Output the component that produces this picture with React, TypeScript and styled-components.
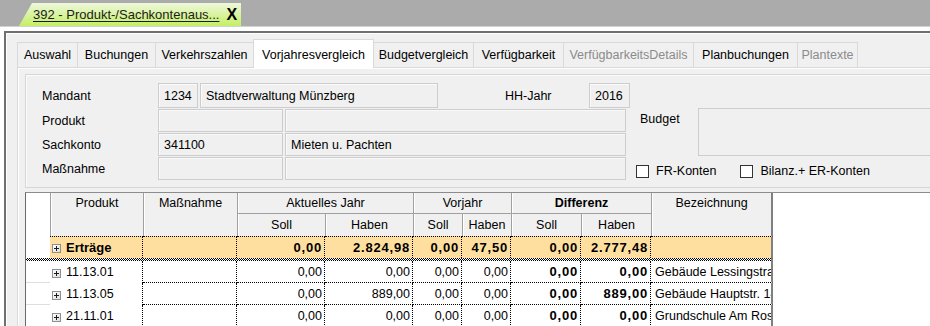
import React from 'react';
import styled, { createGlobalStyle } from 'styled-components';

const GlobalStyle = createGlobalStyle`
  html, body { margin: 0; padding: 0; }
  body {
    font-family: "Liberation Sans", Arial, sans-serif;
    font-size: 12.5px;
    color: #000;
    background: #f0f0f0;
  }
`;

const Screen = styled.div`
  width: 930px;
  height: 326px;
  overflow: hidden;
  display: flex;
  flex-direction: column;
  background: #ababab;
`;

const TopBar = styled.div`
  height: 26px;
  flex: none;
  display: flex;
  align-items: flex-end;
  padding-left: 19px;
  background: #ababab;
`;

const DocTab = styled.div`
  width: 222px;
  height: 23px;
  box-sizing: border-box;
  padding-left: 14px;
  display: flex;
  align-items: center;
  gap: 7px;
  background: linear-gradient(#eef7dc, #c4ef64);
  clip-path: polygon(13px 0, 100% 0, 100% 100%, 0 100%);
`;

const DocTitle = styled.span`
  font-size: 13px;
  color: #1c1c1c;
  text-decoration: underline;
  text-underline-offset: 2px;
  white-space: nowrap;
`;

const CloseX = styled.span`
  font-size: 16px;
  font-weight: bold;
  line-height: 1;
  color: #000;
`;

const Body = styled.div`
  flex: 1;
  min-height: 0;
  display: flex;
  background: #fff;
  border-top: 1px solid #d2d2d2;
  padding: 4px 0 0 4px;
`;

const Window = styled.div`
  flex: 1;
  min-width: 0;
  display: flex;
  flex-direction: column;
  background: #f0f0f0;
  border-top: 2px solid #6f6f6f;
  border-left: 2px solid #6f6f6f;
  box-shadow: inset 1px 1px 0 #fff;
  padding: 6px 0 0 11px;
`;

const TabStrip = styled.div`
  height: 28px;
  flex: none;
  display: flex;
  align-items: flex-end;
`;

const Tab = styled.div<{ $w: number; $active?: boolean; $disabled?: boolean }>`
  width: ${(p) => p.$w}px;
  height: ${(p) => (p.$active ? 29 : 25)}px;
  margin-bottom: ${(p) => (p.$active ? -1 : 0)}px;
  margin-right: -1px;
  box-sizing: border-box;
  padding-top: ${(p) => (p.$active ? 2 : 0)}px;
  display: flex;
  align-items: center;
  justify-content: center;
  white-space: nowrap;
  border: 1px solid #d9d9d9;
  border-bottom: none;
  background: ${(p) => (p.$active ? '#fff' : '#f0f0f0')};
  color: ${(p) => (p.$disabled ? '#8b8b8b' : '#000')};
  position: relative;
  z-index: ${(p) => (p.$active ? 2 : 1)};
`;

const TabPage = styled.div`
  flex: 1;
  min-height: 0;
  display: flex;
  flex-direction: column;
  border-top: 1px solid #d9d9d9;
  border-left: 1px solid #d9d9d9;
  box-shadow: inset 1px 1px 0 #fff;
  padding: 6px 0 0 7px;
`;

const Panel = styled.div`
  height: 114px;
  flex: none;
  box-sizing: border-box;
  border: 1px solid #d6d6d6;
  border-right: none;
  box-shadow: inset 1px 1px 0 #fbfbfb;
  padding: 8px 0 0 16px;
  display: flex;
  gap: 8px;
`;

const FormCol = styled.div`
  width: 586px;
  flex: none;
  display: flex;
  flex-direction: column;
`;

const FormRow = styled.div<{ $h: number }>`
  height: ${(p) => p.$h}px;
  display: flex;
  align-items: flex-start;
  gap: 2px;
`;

const Label = styled.div<{ $w: number; $ml?: number; $h?: number }>`
  width: ${(p) => p.$w}px;
  margin-left: ${(p) => p.$ml ?? 0}px;
  height: ${(p) => p.$h ?? 24}px;
  flex: none;
  display: flex;
  align-items: center;
  white-space: nowrap;
  margin-right: -2px;
`;

const Field = styled.div<{ $w: number; $h: number }>`
  width: ${(p) => p.$w}px;
  height: ${(p) => p.$h}px;
  flex: none;
  box-sizing: border-box;
  border: 1px solid #cdcdcd;
  box-shadow: inset 1px 1px 0 #fafafa;
  background: #f0f0f0;
  padding: 0 5px;
  display: flex;
  align-items: center;
  white-space: nowrap;
  overflow: hidden;
`;

const RightCol = styled.div`
  flex: 1;
  min-width: 0;
  display: flex;
  flex-direction: column;
  padding-top: 25px;
`;

const BudgetRow = styled.div`
  display: flex;
  align-items: flex-start;
`;

const BudgetLabel = styled.div`
  width: 58px;
  margin-left: 4px;
  padding-top: 4px;
  flex: none;
`;

const BudgetBox = styled.div`
  flex: 1;
  height: 48px;
  box-sizing: border-box;
  border: 1px solid #cdcdcd;
  border-right: none;
  background: #f0f0f0;
`;

const CheckRow = styled.div`
  margin-top: 8px;
  display: flex;
  align-items: center;
  height: 14px;
`;

const CheckBox = styled.span`
  width: 13px;
  height: 13px;
  flex: none;
  box-sizing: border-box;
  border: 1px solid #333;
  background: #fff;
`;

const CheckLabel = styled.span<{ $mr?: number }>`
  margin-left: 7px;
  margin-right: ${(p) => p.$mr ?? 0}px;
  white-space: nowrap;
`;

const Grid = styled.div`
  flex: 1;
  min-height: 0;
  margin-top: 4px;
  background: #fff;
  border-top: 1px solid #8c8c8c;
  border-left: 1px solid #6a6a6a;
  overflow: hidden;
`;

const Table = styled.table`
  border-collapse: separate;
  border-spacing: 0;
  table-layout: fixed;
  width: 747px;
  font-size: 12.5px;
`;

const Corner = styled.th`
  background: #fff;
  padding: 0;
`;

const HeadCell = styled.th<{ $bold?: boolean; $top?: boolean; $last?: boolean; $group?: boolean }>`
  background: #f0f0f0;
  font-weight: ${(p) => (p.$bold ? 'bold' : 'normal')};
  text-align: center;
  vertical-align: ${(p) => (p.$top ? 'top' : 'middle')};
  padding: ${(p) => (p.$top ? '3px 2px 0' : '0 2px')};
  border-left: 1px solid #a0a0a0;
  border-bottom: ${(p) => (p.$group ? '1px solid #a0a0a0' : 'none')};
  border-right: ${(p) => (p.$last ? '2px solid #7f7f7f' : 'none')};
  box-shadow: inset 1px 0 0 #fff;
  white-space: nowrap;
  overflow: hidden;
`;

const HeadRow = styled.tr<{ $h: number }>`
  height: ${(p) => p.$h}px;
`;

const BodyRow = styled.tr`
  height: 22px;
`;

const RowHead = styled.td<{ $line?: boolean }>`
  background: #fff;
  padding: 0;
  border-bottom: ${(p) => (p.$line ? '1px solid #dedede' : 'none')};
`;

const Cell = styled.td<{
  $sum?: boolean;
  $bold?: boolean;
  $num?: boolean;
  $tree?: boolean;
  $last?: boolean;
  $first?: boolean;
}>`
  background: ${(p) => (p.$sum ? '#ffdf9f' : '#fff')};
  font-weight: ${(p) => (p.$bold ? 'bold' : 'normal')};
  font-size: ${(p) => (p.$bold ? '13px' : '12.5px')};
  letter-spacing: ${(p) => (p.$bold && p.$num ? '0.8px' : '0')};
  text-align: ${(p) => (p.$num ? 'right' : 'left')};
  padding: ${(p) => (p.$num ? '0 2px 0 2px' : p.$tree ? '0 0 0 2px' : '0 0 0 4px')};
  border-top: ${(p) => (p.$first ? '1px dotted #000' : 'none')};
  border-bottom: ${(p) => (p.$tree || p.$sum ? 'none' : '1px dotted #000')};
  border-right: ${(p) => (p.$last ? '2px solid #7f7f7f' : '1px dotted #000')};
  white-space: nowrap;
  overflow: hidden;
  text-overflow: clip;
  vertical-align: middle;
`;

const TreeLabel = styled.span`
  display: flex;
  align-items: center;
  gap: 5px;
`;

const SepRow = styled.tr`
  height: 3px;
`;

const SepCell = styled.td`
  padding: 0;
  height: 3px;
  font-size: 0;
  line-height: 0;
  background: repeating-conic-gradient(#000 0 25%, #fff 0 50%) 0 0 / 2px 2px;
`;

const SepEnd = styled(SepCell)`
  border-right: 2px solid #7f7f7f;
`;

const PlusBox = () => (
  <svg width="9" height="9" viewBox="0 0 9 9" style={{ flex: 'none', marginTop: 2 }}>
    <defs>
      <linearGradient id="pb" x1="0" y1="0" x2="1" y2="1">
        <stop offset="0" stopColor="#ffffff" />
        <stop offset="1" stopColor="#dcdcdc" />
      </linearGradient>
    </defs>
    <rect x="0.5" y="0.5" width="8" height="8" fill="url(#pb)" stroke="#8f8f8f" />
    <path d="M2 4.5h5M4.5 2v5" stroke="#1a1a1a" strokeWidth="1" />
  </svg>
);

const tabs = [
  { label: 'Auswahl', w: 61 },
  { label: 'Buchungen', w: 79 },
  { label: 'Verkehrszahlen', w: 99 },
  { label: 'Vorjahresvergleich', w: 121, active: true },
  { label: 'Budgetvergleich', w: 101 },
  { label: 'Verfügbarkeit', w: 91 },
  { label: 'VerfügbarkeitsDetails', w: 131, disabled: true },
  { label: 'Planbuchungen', w: 105 },
  { label: 'Plantexte', w: 61, disabled: true },
];

const rows = [
  { p: '11.13.01', v: ['0,00', '0,00', '0,00', '0,00', '0,00', '0,00'], b: 'Gebäude Lessingstraße 12' },
  { p: '11.13.05', v: ['0,00', '889,00', '0,00', '0,00', '0,00', '889,00'], b: 'Gebäude Hauptstr. 14' },
  { p: '21.11.01', v: ['0,00', '0,00', '0,00', '0,00', '0,00', '0,00'], b: 'Grundschule Am Rosengarten' },
];

const sums = ['0,00', '2.824,98', '0,00', '47,50', '0,00', '2.777,48'];
const widths = [24, 93, 94, 88, 88, 49, 49, 70, 70, 122];

export default function App() {
  return (
    <>
      <GlobalStyle />
      <Screen>
        <TopBar>
          <DocTab>
            <DocTitle>392 - Produkt-/Sachkontenaus...</DocTitle>
            <CloseX>X</CloseX>
          </DocTab>
        </TopBar>
        <Body>
          <Window>
            <TabStrip>
              {tabs.map((t) => (
                <Tab key={t.label} $w={t.w} $active={t.active} $disabled={t.disabled}>
                  {t.label}
                </Tab>
              ))}
            </TabStrip>
            <TabPage>
              <Panel>
                <FormCol>
                  <FormRow $h={26}>
                    <Label $w={116} $h={25}>Mandant</Label>
                    <Field $w={40} $h={25}>1234</Field>
                    <Field $w={238} $h={25}>Stadtverwaltung Münzberg</Field>
                    <Label $w={84} $ml={65} $h={25}>HH-Jahr</Label>
                    <Field $w={41} $h={25}>2016</Field>
                  </FormRow>
                  <FormRow $h={24}>
                    <Label $w={116} $h={23}>Produkt</Label>
                    <Field $w={125} $h={23} />
                    <Field $w={341} $h={23} />
                  </FormRow>
                  <FormRow $h={24}>
                    <Label $w={116} $h={23}>Sachkonto</Label>
                    <Field $w={125} $h={23}>341100</Field>
                    <Field $w={341} $h={23}>Mieten u. Pachten</Field>
                  </FormRow>
                  <FormRow $h={24}>
                    <Label $w={116} $h={23}>Maßnahme</Label>
                    <Field $w={125} $h={23} />
                    <Field $w={341} $h={23} />
                  </FormRow>
                </FormCol>
                <RightCol>
                  <BudgetRow>
                    <BudgetLabel>Budget</BudgetLabel>
                    <BudgetBox />
                  </BudgetRow>
                  <CheckRow>
                    <CheckBox />
                    <CheckLabel $mr={24}>FR-Konten</CheckLabel>
                    <CheckBox />
                    <CheckLabel>Bilanz.+ ER-Konten</CheckLabel>
                  </CheckRow>
                </RightCol>
              </Panel>
              <Grid>
                <Table>
                  <colgroup>
                    {widths.map((w, i) => (
                      <col key={i} style={{ width: w }} />
                    ))}
                  </colgroup>
                  <thead>
                    <HeadRow $h={21}>
                      <Corner rowSpan={2} />
                      <HeadCell rowSpan={2} $top>Produkt</HeadCell>
                      <HeadCell rowSpan={2} $top>Maßnahme</HeadCell>
                      <HeadCell colSpan={2} $group>Aktuelles Jahr</HeadCell>
                      <HeadCell colSpan={2} $group>Vorjahr</HeadCell>
                      <HeadCell colSpan={2} $group $bold>Differenz</HeadCell>
                      <HeadCell rowSpan={2} $top $last>Bezeichnung</HeadCell>
                    </HeadRow>
                    <HeadRow $h={22}>
                      <HeadCell>Soll</HeadCell>
                      <HeadCell>Haben</HeadCell>
                      <HeadCell>Soll</HeadCell>
                      <HeadCell>Haben</HeadCell>
                      <HeadCell>Soll</HeadCell>
                      <HeadCell>Haben</HeadCell>
                    </HeadRow>
                  </thead>
                  <tbody>
                    <BodyRow>
                      <RowHead />
                      <Cell $sum $first $bold $tree>
                        <TreeLabel>
                          <PlusBox />
                          Erträge
                        </TreeLabel>
                      </Cell>
                      <Cell $sum $first />
                      {sums.map((s, i) => (
                        <Cell key={i} $sum $first $bold $num>
                          {s}
                        </Cell>
                      ))}
                      <Cell $sum $first $last />
                    </BodyRow>
                    <SepRow>
                      <SepCell colSpan={9} />
                      <SepEnd />
                    </SepRow>
                    {rows.map((r) => (
                      <BodyRow key={r.p}>
                        <RowHead $line />
                        <Cell $tree>
                          <TreeLabel>
                            <PlusBox />
                            {r.p}
                          </TreeLabel>
                        </Cell>
                        <Cell />
                        {r.v.map((v, i) => (
                          <Cell key={i} $num $bold={i >= 4}>
                            {v}
                          </Cell>
                        ))}
                        <Cell $last>{r.b}</Cell>
                      </BodyRow>
                    ))}
                  </tbody>
                </Table>
              </Grid>
            </TabPage>
          </Window>
        </Body>
      </Screen>
    </>
  );
}
